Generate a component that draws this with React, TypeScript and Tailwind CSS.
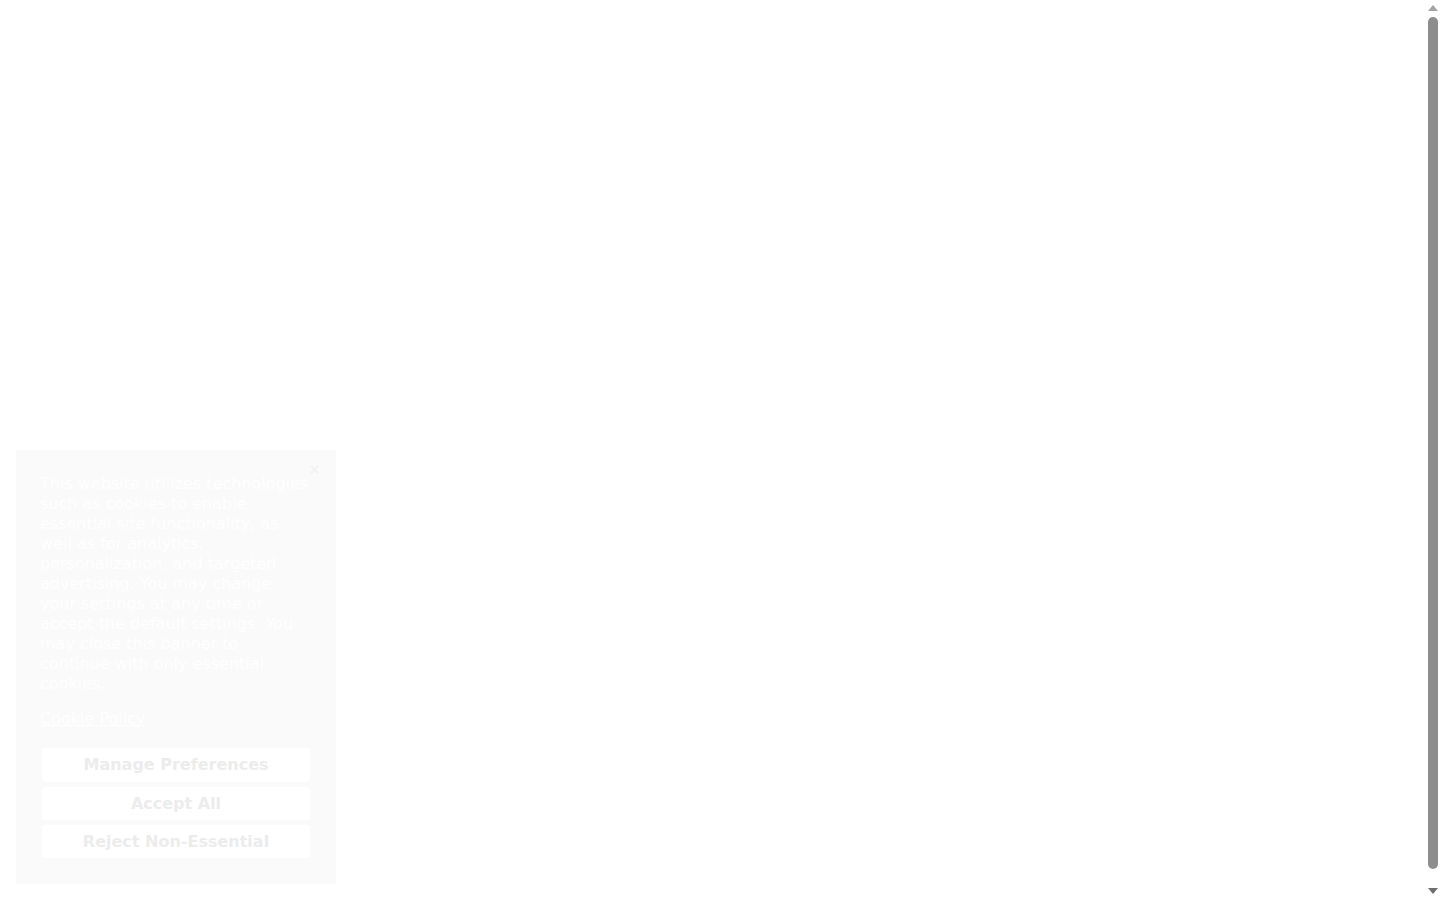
import React from "react";

// Cookie banner — faded in over an empty page
export default function App() {
  return (
    <div className="min-h-[900px] bg-white" style={{ fontFamily: '"DejaVu Sans", sans-serif' }}>
      {/* Classic window scrollbar, drawn over the page edge */}
      <div className="fixed right-0 top-0 flex h-[900px] w-[15px] flex-col items-center bg-white">
        <svg viewBox="0 0 10 6" className="mt-[5px] h-[6px] w-[10px] text-[#a3a3a3]" fill="currentColor">
          <path d="M5 0l5 6H0z" />
        </svg>
        <div className="mt-[6px] w-[10px] flex-1 rounded-full bg-[#8d8d8d]" />
        <div className="h-[19px]" />
        <svg viewBox="0 0 10 6" className="mb-[6px] h-[6px] w-[10px] text-[#6f6f6f]" fill="currentColor">
          <path d="M0 0h10L5 6z" />
        </svg>
      </div>

      <div className="fixed bottom-4 left-4 w-[320px] bg-[#fafafa] px-6 pt-[24px] pb-[26px]">
        <button
          aria-label="Close"
          className="absolute right-[15px] top-[12px] flex h-[14px] w-[14px] items-center justify-center text-[#efefef]"
        >
          <svg viewBox="0 0 10 10" className="h-[9px] w-[9px]" fill="none" stroke="currentColor" strokeWidth="1.3">
            <path d="M1 1l8 8M9 1l-8 8" />
          </svg>
        </button>
        <p className="text-[16px] leading-5 text-white">
          This website utilizes technologies such as cookies to enable essential site functionality, as well as for
          analytics, personalization, and targeted advertising. You may change your settings at any time or accept the
          default settings. You may close this banner to continue with only essential cookies.
        </p>
        <a href="#" className="mt-[15px] inline-block text-[16px] leading-5 text-white underline">
          Cookie Policy
        </a>
        <div className="mt-[17px] flex flex-col gap-[5px] px-[2px]">
          <button className="h-[34px] rounded bg-white text-[16px] font-bold text-[#ececec]">Manage Preferences</button>
          <button className="h-[33px] rounded bg-white text-[16px] font-bold text-[#ececec]">Accept All</button>
          <button className="h-[33px] rounded bg-white text-[16px] font-bold text-[#ececec]">Reject Non-Essential</button>
        </div>
      </div>
    </div>
  );
}
